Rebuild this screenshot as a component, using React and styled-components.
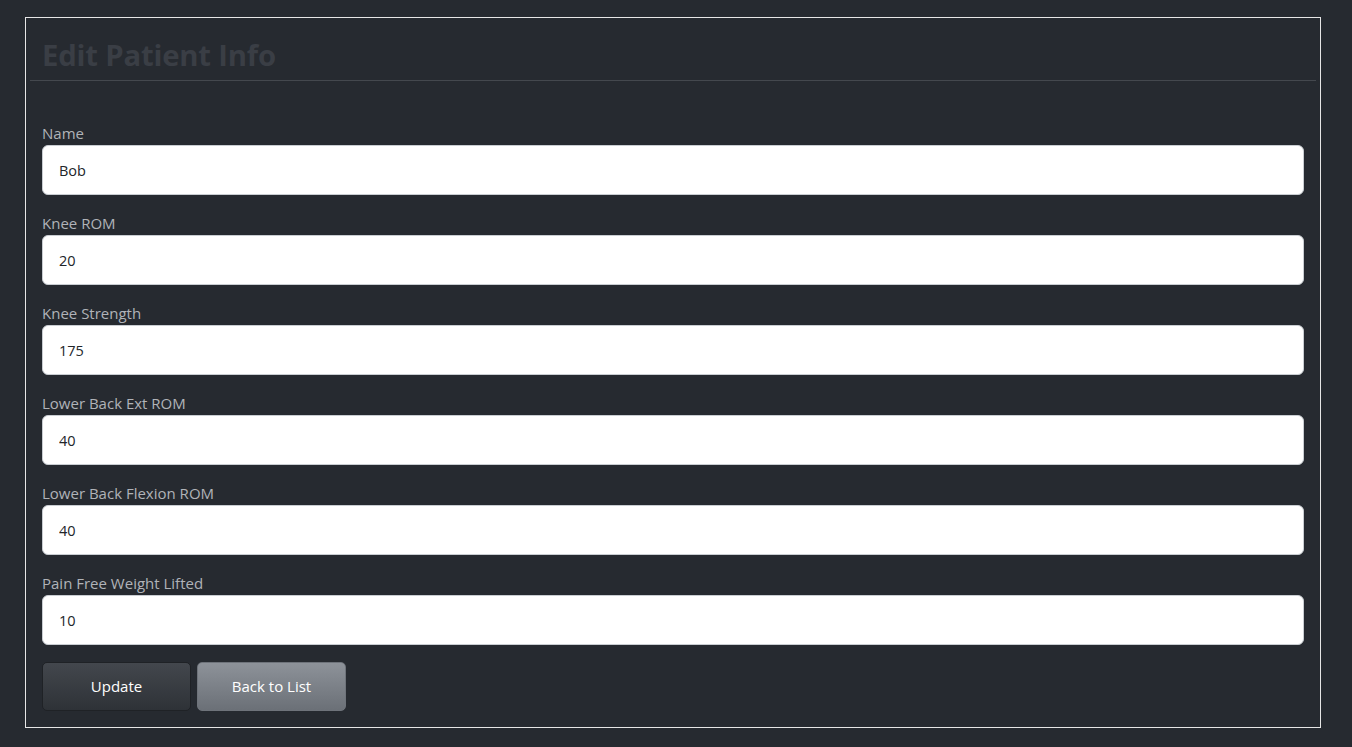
import styled, { createGlobalStyle } from 'styled-components';

const GlobalStyle = createGlobalStyle`
  html, body {
    margin: 0;
    background: #262a30;
    font-family: 'Open Sans', 'Noto Sans', sans-serif;
  }
  * { box-sizing: border-box; }
`;

const fields = [
  { label: 'Name', value: 'Bob' },
  { label: 'Knee ROM', value: '20' },
  { label: 'Knee Strength', value: '175' },
  { label: 'Lower Back Ext ROM', value: '40' },
  { label: 'Lower Back Flexion ROM', value: '40' },
  { label: 'Pain Free Weight Lifted', value: '10' },
];

export default function App() {
  return (
    <>
      <GlobalStyle />
      <Page>
        <Panel>
          <Header>
            <h1>Edit Patient Info</h1>
          </Header>
          <Form onSubmit={(e) => e.preventDefault()}>
            {fields.map((f) => (
              <Field key={f.label}>
                <label>{f.label}</label>
                <input defaultValue={f.value} />
              </Field>
            ))}
            <Actions>
              <Button type="submit">Update</Button>
              <Button type="button" light>Back to List</Button>
            </Actions>
          </Form>
        </Panel>
      </Page>
    </>
  );
}

const Page = styled.div`
  padding: 17px 31px 19px 25px;
  min-height: 747px;
`;

const Panel = styled.section`
  border: 1px solid #e6e6e6;
  padding: 0 4px;
  height: 711px;
`;

const Header = styled.div`
  border-bottom: 1px solid #44484e;
  padding: 17px 12px 0;
  height: 63px;
  h1 {
    margin: 0;
    font-size: 29.3px;
    font-weight: 700;
    line-height: 40px;
    color: #3a3e45;
    letter-spacing: -0.2px;
  }
`;

const Form = styled.form`
  padding: 42px 12px 0;
  display: flex;
  flex-direction: column;
  gap: 18px;
`;

const Field = styled.div`
  display: flex;
  flex-direction: column;
  label {
    font-size: 15px;
    line-height: 20px;
    padding-bottom: 2px;
    color: #b0b3b8;
  }
  input {
    height: 50px;
    border: 1px solid #c9cdd2;
    border-radius: 6px;
    background: #fff;
    padding: 0 16px;
    font-family: inherit;
    font-size: 14.5px;
    color: #212529;
    outline: none;
  }
`;

const Actions = styled.div`
  display: flex;
  gap: 6px;
  margin-top: -1px;
`;

const Button = styled.button`
  width: 149px;
  height: 49px;
  border-radius: 5px;
  border: 1px solid ${(p) => (p.light ? '#6e737a' : '#1f2226')};
  background: ${(p) =>
    p.light
      ? 'linear-gradient(to bottom, #8d9299, #6b7077)'
      : 'linear-gradient(to bottom, #43474d, #2e3237)'};
  color: #fff;
  font-family: inherit;
  font-size: 15px;
  line-height: 20px;
  padding: 0 0 2px;
  cursor: pointer;
`;
